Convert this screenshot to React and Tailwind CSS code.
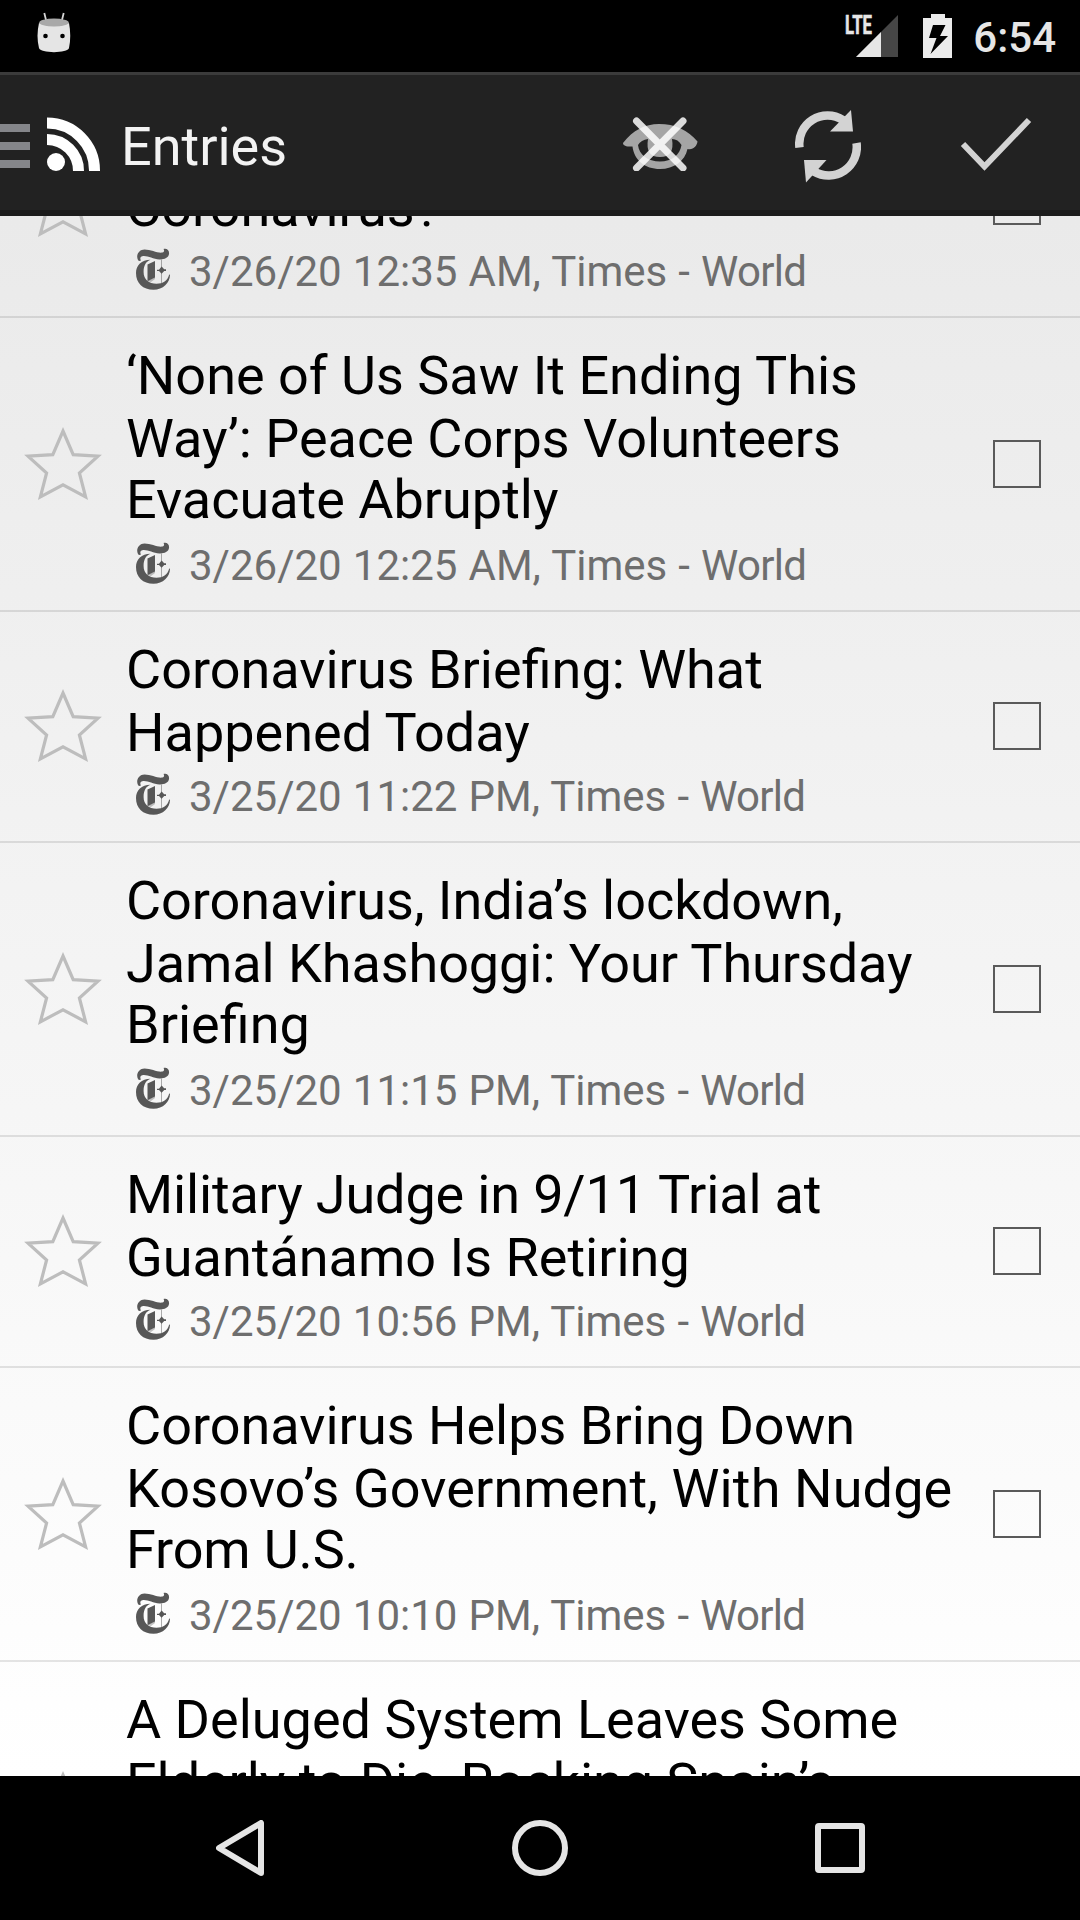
import React from "react";

const ENTRIES = [
  { lines: [{ text: "\u00a0" }, { text: "Coronavirus?" }], time: "3/26/20 12:35 AM" },
  {
    lines: [{ text: "‘None of Us Saw It Ending This" }, { text: "Way’: Peace Corps Volunteers" }, { text: "Evacuate Abruptly" }],
    time: "3/26/20 12:25 AM",
  },
  { lines: [{ text: "Coronavirus Briefing: What" }, { text: "Happened Today" }], time: "3/25/20 11:22 PM" },
  {
    lines: [
      { text: "Coronavirus, India’s lockdown,", tracking: "tracking-[-0.06px]" },
      { text: "Jamal Khashoggi: Your Thursday", tracking: "tracking-[-0.08px]" },
      { text: "Briefing" },
    ],
    time: "3/25/20 11:15 PM",
  },
  {
    lines: [{ text: "Military Judge in 9/11 Trial at", tracking: "tracking-[-0.16px]" }, { text: "Guantánamo Is Retiring" }],
    time: "3/25/20 10:56 PM",
  },
  {
    lines: [
      { text: "Coronavirus Helps Bring Down" },
      { text: "Kosovo’s Government, With Nudge", tracking: "tracking-[0.12px]" },
      { text: "From U.S.", tracking: "tracking-[-0.15px]" },
    ],
    time: "3/25/20 10:10 PM",
  },
  {
    lines: [{ text: "A Deluged System Leaves Some" }, { text: "Elderly to Die, Rocking Spain’s", tracking: "tracking-[-0.08px]" }, { text: "\u00a0" }],
    time: null,
  },
];

function TimesLogo() {
  return (
    <svg viewBox="0 0 34 42" className="w-[34px] h-[42px] ml-[10px] mt-[-5px] shrink-0" fill="#575757">
      <path d="M2 12C-0.5 7 3 1.5 8.5 1.5C15 1.5 22 5.5 26.5 4.5C28.3 4 28.5 2.5 27.5 1C31 0 33.5 2.5 33 6C32.5 10 28 11.6 23.5 11.4C17 11 12.5 7.8 7.5 8C4.5 8.2 3.5 10 5 12.6C3.5 13.4 2.6 13.2 2 12Z" />
      <path d="M14.5 11.8C10 13.3 7.6 17.5 7.6 24C7.6 31.5 13 35.7 20.5 35.7C27 35.7 31.5 33 33.2 26.5L34 26.8C34 35 27 41.8 17.5 41.8C7 41.8 0 35.3 0 25C0 17.5 5.5 12 14.5 11.8Z" />
      <path d="M11.5 16.5L19 13V29.5L11.5 33.2Z" />
      <path d="M21 21.8H23L25.6 18.4L28.2 21.3H30V22.9H28.2L25.6 25.8L23 22.9H21Z" />
      <path d="M25.2 11.5H26V35H25.2Z" opacity="0.6" />
      <path d="M11.5 33L19 29.2V31L15 34Z" opacity="0.35" />
    </svg>
  );
}

function Star() {
  return (
    <svg viewBox="0 0 80 80" className="w-[80px] h-[80px] ml-[23px] shrink-0" fill="none" stroke="#bdbdbd" strokeWidth="3.2" strokeMiterlimit="10">
      <path d="M40 7L50.2 30.6L75 32.2L56.4 49L62.6 72.8L40 60.8L17.4 72.8L23.6 49L5 32.2L29.8 30.6Z" />
    </svg>
  );
}

function Entry({ entry }) {
  const tall = entry.lines.length === 3;
  return (
    <li className={`${tall ? "h-[294px]" : "h-[231px] pb-px"} shrink-0 flex items-center border-b-2 border-black/10`}>
      <Star />
      <div className="ml-[23px] flex-1 self-start pt-[26px] whitespace-nowrap">
        <h2 className="text-[54px] leading-[63px] text-black">
          {entry.lines.map((line, i) => (
            <span key={i} className={`block ${line.tracking || ""} ${i === 2 ? "mt-[-2px] pb-[2px]" : ""}`}>
              {line.text}
            </span>
          ))}
        </h2>
        {entry.time && (
          <p className="mt-[8px] flex items-center h-[49px] text-[42px] leading-[49px] text-[#6e6e6e]">
            <TimesLogo />
            <span className="ml-[19px] [word-spacing:0.7px]">
              {entry.time}, Times - <span className="tracking-[-0.7px]">World</span>
            </span>
          </p>
        )}
      </div>
      <span className="w-[48px] h-[48px] mr-[39px] border-2 border-[#5a5a5a] shrink-0" />
    </li>
  );
}

function StatusBar() {
  return (
    <div className="h-[72px] shrink-0 bg-black flex items-center text-[#e6e6e6]">
      <svg viewBox="0 0 34 42" className="w-[34px] h-[42px] ml-[37px] mt-[-6px]">
        <path d="M7.3 1L9.5 10M26.7 1L24.5 10" stroke="#d5d5d5" strokeWidth="1.8" />
        <path d="M2 11Q17 16 32 11Q34.5 24 32 36C31 41.5 3 41.5 2 36Q-1 24 2 11Z" fill="#e5e5e5" />
        <ellipse cx="17" cy="10.5" rx="14.8" ry="4" fill="#a9a9a9" />
        <circle cx="8.5" cy="24" r="2.3" />
        <circle cx="25.5" cy="24" r="2.3" />
      </svg>
      <div className="flex-1" />
      <svg viewBox="0 0 54 44" className="w-[54px] h-[44px] mt-[-1px] overflow-visible" fill="#e6e6e6">
        <path d="M11 43L53 1V43Z" fill="#464646" />
        <path d="M11 43L36 18V43Z" />
        <text x="0" y="20" fontFamily="Roboto" fontSize="26" fontWeight="700" stroke="#e6e6e6" strokeWidth="0.6" textLength="27" lengthAdjust="spacingAndGlyphs">LTE</text>
      </svg>
      <svg viewBox="0 0 30 44" className="w-[30px] h-[44px] ml-[24px]" fill="#ebebeb">
        <path fillRule="evenodd" d="M8 0H22V4H29V44H0V4H8ZM10 11L6 24H13.5L7.5 40L25 22H17L22.5 11Z" />
      </svg>
      <span className="ml-[20px] mr-[24px] mt-[2px] text-[42px] font-medium">6:54</span>
    </div>
  );
}

function ActionBar() {
  return (
    <header className="h-[144px] shrink-0 bg-[#222222] border-t-[3px] border-t-[#3b3b3b] border-b-[6px] border-b-[#1b1b1b] flex items-center pt-[7px]">
      <div className="w-[30px] flex flex-col gap-[10px]">
        <i className="block h-[8px] bg-[#85868a]" />
        <i className="block h-[8px] bg-[#85868a]" />
        <i className="block h-[8px] bg-[#85868a]" />
      </div>
      <svg viewBox="0 0 54 54" className="w-[54px] h-[54px] ml-[17px] mt-[-4px]" fill="none" stroke="white" strokeWidth="11">
        <circle cx="9" cy="45" r="9" fill="white" stroke="none" />
        <path d="M0 22.5A31.5 31.5 0 0 1 31.5 54M0 6A47.5 47.5 0 0 1 47.5 54" />
      </svg>
      <h1 className="ml-[20px] mt-[2px] text-[54px] leading-[64px] text-[#f3f3f3]">Entries</h1>
      <div className="flex-1" />
      <svg viewBox="0 0 76 54" className="w-[76px] h-[54px] mt-[-4px]">
        <path fillRule="evenodd" fill="#a5a5a5" d="M1 26C11 13 23 7 37 7C53 7 66 13 75.5 24.5C75 29 71 33.5 65.5 32C63 44 52 52 38 52C23 52 12 43 10.5 29.5C6 30 1 29 1 26ZM16 28C17 38 26 44.5 38 44.5C50 44.5 58 38 59.5 28Q56 22 50 22Q53 40 38 40Q23 40 26 22Q19 23 16 28Z" />
        <path d="M14.5 4L61 51M61 4L14.5 51" stroke="white" strokeOpacity="0.84" strokeWidth="7" strokeLinecap="round" />
      </svg>
      <svg viewBox="0 0 66 74" className="w-[66px] h-[74px] ml-[97px] mt-[-1px]" fill="#d3d3d3">
        <path d="M4.5 38.5A28.3 28.3 0 0 1 48 11" fill="none" stroke="#d3d3d3" strokeWidth="8.5" />
        <path d="M56 1L58 22.5H35Z" />
        <path d="M61.5 34A28.3 28.3 0 0 1 19 62.5" fill="none" stroke="#d3d3d3" strokeWidth="8.5" />
        <path d="M9 51L31.5 51L11 73.5Z" />
      </svg>
      <svg viewBox="0 0 72 54" className="w-[72px] h-[54px] ml-[99px] mr-[48px] mt-[-4px]" fill="none" stroke="#d3d3d3" strokeWidth="6">
        <path d="M3 27L24.5 49.5L69 3" />
      </svg>
    </header>
  );
}

function NavBar() {
  return (
    <nav className="h-[144px] shrink-0 bg-black flex items-center pl-[216px]">
      <svg viewBox="0 0 48 56" className="w-[48px] h-[56px]" fill="none" stroke="#e5e5e5" strokeWidth="6" strokeLinejoin="round">
        <path d="M45 3V53L3 28Z" />
      </svg>
      <i className="block w-[56px] h-[56px] ml-[248px] rounded-full border-[6px] border-[#e5e5e5]" />
      <i className="block w-[50px] h-[50px] ml-[247px] rounded-[4px] border-[6px] border-[#e5e5e5]" />
    </nav>
  );
}

export default function App() {
  return (
    <div className="w-[1080px] h-[1920px] flex flex-col overflow-hidden font-['Roboto',sans-serif]">
      <StatusBar />
      <ActionBar />
      <main className="flex-1 min-h-0 overflow-hidden bg-linear-to-b from-[#eaeaea] to-white">
        <ul className="flex flex-col mt-[-129px]">
          {ENTRIES.map((entry, i) => (
            <Entry key={i} entry={entry} />
          ))}
        </ul>
      </main>
      <NavBar />
    </div>
  );
}
